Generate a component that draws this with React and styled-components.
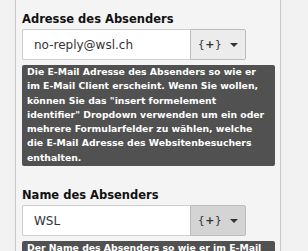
import React from 'react';
import styled, {createGlobalStyle} from 'styled-components';

const GlobalStyle = createGlobalStyle`
  html, body {
    margin: 0;
    padding: 0;
    background: #f2f2f2;
  }
  body {
    font-family: "DejaVu Sans", Verdana, sans-serif;
  }
`;

const Page = styled.div`
  display: flex;
  height: 251px;
  overflow: hidden;
`;

const Gutter = styled.div`
  width: 15px;
  flex: none;
  background: #f2f2f2;
`;

const Panel = styled.div`
  width: 266px;
  flex: none;
  background: #f4f4f4;
  border-left: 1px solid #c8c8c8;
  border-right: 1px solid #c8c8c8;
  padding: 11px 6px 0 6px;
  box-sizing: border-box;
`;

const Field = styled.div`
  margin-bottom: 21px;
`;

const Label = styled.div`
  font-weight: bold;
  font-size: 11.5px;
  color: #111;
  line-height: 16px;
  margin-bottom: 2px;
`;

const InputGroup = styled.div`
  display: flex;
  width: 224px;
  height: 31px;
`;

const Input = styled.div`
  flex: 1;
  background: #fff;
  border: 1px solid #cfcfcf;
  border-right: none;
  border-radius: 2px 0 0 2px;
  font-size: 12px;
  color: #333;
  display: flex;
  align-items: center;
  padding-left: 11px;
`;

const AddonButton = styled.div`
  width: 56px;
  box-sizing: border-box;
  display: flex;
  align-items: center;
  justify-content: center;
  gap: 9px;
  background: ${p => (p.active ? '#d4d4d4' : '#ececec')};
  border: 1px solid #bcbcbc;
  border-radius: 0 2px 2px 0;
  color: #333;
  font-size: 11px;
`;

const Brace = styled.span`
  letter-spacing: -0.5px;
  b {
    font-weight: bold;
    margin: 0 1px;
  }
`;

const Caret = styled.span`
  width: 0;
  height: 0;
  border-left: 4px solid transparent;
  border-right: 4px solid transparent;
  border-top: 4px solid #333;
`;

const Help = styled.div`
  margin-top: 5px;
  width: 253px;
  box-sizing: border-box;
  background: #515151;
  color: #fff;
  border-radius: 2px;
  font-weight: bold;
  font-size: 9.3px;
  line-height: 14.3px;
  padding: 0 5px 1px;
`;

const fields = [
  {
    label: 'Adresse des Absenders',
    value: 'no-reply@wsl.ch',
    help: 'Die E-Mail Adresse des Absenders so wie er im E-Mail Client erscheint. Wenn Sie wollen, können Sie das "insert formelement identifier" Dropdown verwenden um ein oder mehrere Formularfelder zu wählen, welche die E-Mail Adresse des Websitenbesuchers enthalten.',
  },
  {
    label: 'Name des Absenders',
    value: 'WSL',
    active: true,
    help: 'Der Name des Absenders so wie er im E-Mail Client erscheint.',
  },
];

const App = () => (
  <>
    <GlobalStyle />
    <Page>
      <Gutter />
      <Panel>
        {fields.map(f => (
          <Field key={f.label}>
            <Label>{f.label}</Label>
            <InputGroup>
              <Input>{f.value}</Input>
              <AddonButton active={f.active}>
                <Brace>{'{'}<b>+</b>{'}'}</Brace>
                <Caret />
              </AddonButton>
            </InputGroup>
            <Help>{f.help}</Help>
          </Field>
        ))}
      </Panel>
    </Page>
  </>
);

export default App;
